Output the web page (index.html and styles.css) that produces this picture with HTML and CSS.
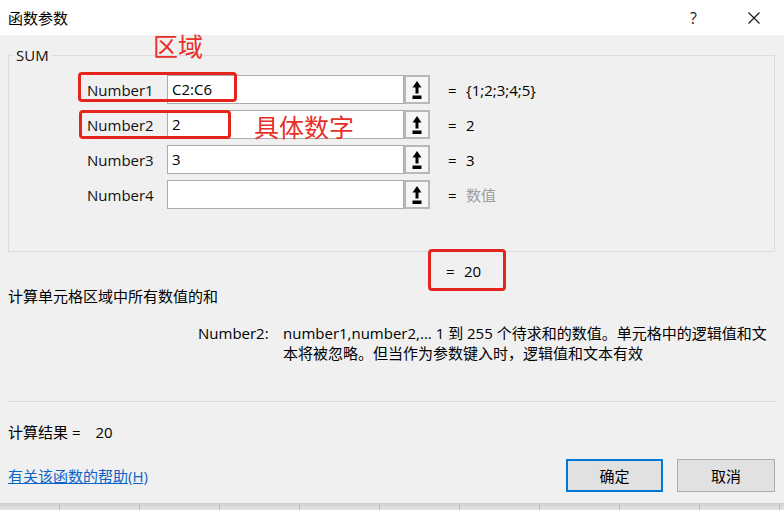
FILE: index.html
```html
<!DOCTYPE html>
<html lang="zh-CN">
<head>
  <meta charset="UTF-8">
  <meta name="viewport" content="width=device-width, initial-scale=1.0">
  <title>函数参数</title>
  <link rel="stylesheet" href="styles.css">
</head>
<body>

  <div class="dialog">
    <header class="titlebar">
      <div class="title">函数参数</div>
      <div class="title-help">?</div>
      <div class="title-close">
        <svg width="12" height="12" viewBox="0 0 12 12"><path d="M0.5 0.5 L11.5 11.5 M11.5 0.5 L0.5 11.5" stroke="#111" stroke-width="1.1" fill="none"/></svg>
      </div>
    </header>

    <div class="content">
      <fieldset class="group">
        <legend>SUM</legend>

        <div class="arg-row">
          <span class="arg-label">Number1</span>
          <div class="arg-input">C2:C6</div>
          <div class="ref-btn">
            <svg width="12" height="18" viewBox="0 0 12 18"><polygon points="6,0 10.5,6.5 1.5,6.5" fill="#000"/><rect x="4.5" y="6" width="3" height="6.5" fill="#000"/><rect x="1.5" y="14.5" width="9" height="3.5" fill="#000"/></svg>
          </div>
          <span class="arg-eq">=</span>
          <span class="arg-value">{1;2;3;4;5}</span>
        </div>

        <div class="arg-row">
          <span class="arg-label">Number2</span>
          <div class="arg-input">2</div>
          <div class="ref-btn">
            <svg width="12" height="18" viewBox="0 0 12 18"><polygon points="6,0 10.5,6.5 1.5,6.5" fill="#000"/><rect x="4.5" y="6" width="3" height="6.5" fill="#000"/><rect x="1.5" y="14.5" width="9" height="3.5" fill="#000"/></svg>
          </div>
          <span class="arg-eq">=</span>
          <span class="arg-value">2</span>
        </div>

        <div class="arg-row">
          <span class="arg-label">Number3</span>
          <div class="arg-input">3</div>
          <div class="ref-btn">
            <svg width="12" height="18" viewBox="0 0 12 18"><polygon points="6,0 10.5,6.5 1.5,6.5" fill="#000"/><rect x="4.5" y="6" width="3" height="6.5" fill="#000"/><rect x="1.5" y="14.5" width="9" height="3.5" fill="#000"/></svg>
          </div>
          <span class="arg-eq">=</span>
          <span class="arg-value">3</span>
        </div>

        <div class="arg-row">
          <span class="arg-label">Number4</span>
          <div class="arg-input"></div>
          <div class="ref-btn">
            <svg width="12" height="18" viewBox="0 0 12 18"><polygon points="6,0 10.5,6.5 1.5,6.5" fill="#000"/><rect x="4.5" y="6" width="3" height="6.5" fill="#000"/><rect x="1.5" y="14.5" width="9" height="3.5" fill="#000"/></svg>
          </div>
          <span class="arg-eq">=</span>
          <span class="arg-value placeholder">数值</span>
        </div>
      </fieldset>

      <div class="total"><span class="arg-eq">=</span><span>20</span></div>

      <p class="summary">计算单元格区域中所有数值的和</p>

      <div class="arg-help">
        <span class="arg-help-name">Number2:</span>
        <p class="arg-help-text">number1,number2,... 1 到 255 个待求和的数值。单元格中的逻辑值和文<br>本将被忽略。但当作为参数键入时，逻辑值和文本有效</p>
      </div>

      <hr class="divider">

      <div class="result">计算结果 =<span class="result-value">20</span></div>

      <div class="footer">
        <a href="#" class="help-link">有关该函数的帮助(H)</a>
        <div class="footer-buttons">
          <button class="btn btn-default">确定</button>
          <button class="btn">取消</button>
        </div>
      </div>
    </div>

    <!-- annotations drawn on top of the screenshot -->
    <div class="mark mark-range"></div>
    <div class="mark mark-number"></div>
    <div class="mark mark-total"></div>
    <div class="note note-range">区域</div>
    <div class="note note-number">具体数字</div>
  </div>

  <div class="sheet"></div>

</body>
</html>
```

FILE: styles.css
```css
body {
  margin: 0;
  font-family: 'Open Sans', 'Noto Sans CJK SC', sans-serif;
  font-size: 15px;
  line-height: 20px;
  color: #000;
  background-color: #f0f0f0;
}

.dialog {
  position: relative;
  height: 503px;
  background-color: #f0f0f0;
}

.titlebar {
  display: flex;
  align-items: center;
  height: 35px;
  padding-left: 8px;
  background-color: #fff;
}

.title {
  flex: 1;
  font-size: 15px;
}

.title-help {
  width: 58px;
  font-size: 16px;
  color: #222;
}

.title-close {
  display: flex;
  width: 36px;
  padding-top: 1px;
}

.content {
  padding: 11px 9px 0 8px;
}

/* group box */
.group {
  margin: 0;
  padding: 11px 0 42px 0;
  border: 1px solid #dcdcdc;
  min-width: 0;
}

.group legend {
  margin-left: 5px;
  padding: 0 2px;
  line-height: 18px;
  color: #111;
}

.arg-row {
  display: flex;
  align-items: center;
  height: 29px;
  margin-left: 78px;
  margin-bottom: 6px;
}

.arg-row:last-child {
  margin-bottom: 0;
}

.arg-label {
  width: 80px;
  color: #111;
}

.arg-input {
  box-sizing: border-box;
  width: 237px;
  height: 29px;
  padding: 3px 4px 0;
  border: 1px solid #acacac;
  background-color: #fff;
}

.ref-btn {
  box-sizing: border-box;
  display: flex;
  align-items: center;
  justify-content: center;
  width: 26px;
  height: 29px;
  border: 2px solid #b8b8b8;
  background-color: #f6f6f6;
}

.arg-eq {
  display: inline-block;
  width: 18px;
  margin-left: 18px;
}

.arg-value.placeholder {
  color: #9d9d9d;
}

/* under the group box */
.total {
  margin-top: 9px;
  padding-left: 420px;
}

.summary {
  margin: 5px 0 0;
}

.arg-help {
  display: flex;
  margin-top: 17px;
  padding-left: 190px;
}

.arg-help-name {
  width: 85px;
  flex-shrink: 0;
}

.arg-help-text {
  margin: 0;
  white-space: nowrap;
}

.divider {
  margin: 38px 0 0;
  border: none;
  border-top: 1px solid #d9d9d9;
}

.result {
  margin-top: 20px;
}

.result-value {
  margin-left: 15px;
}

.footer {
  display: flex;
  align-items: center;
  justify-content: space-between;
  margin-top: 17px;
}

.help-link {
  color: #0a64c8;
  text-decoration: underline;
}

.footer-buttons {
  display: flex;
  gap: 14px;
}

.btn {
  box-sizing: border-box;
  width: 98px;
  height: 33px;
  font-family: inherit;
  font-size: 15px;
  color: #000;
  background-color: #e1e1e1;
  border: 1px solid #adadad;
  padding: 0;
}

.btn-default {
  width: 97px;
  border: 2px solid #0078d7;
}

/* red annotations */
.mark {
  position: absolute;
  border: 3px solid #e5241d;
  border-radius: 4px;
}

.mark-range {
  left: 78px;
  top: 72px;
  width: 153px;
  height: 24px;
}

.mark-number {
  left: 79px;
  top: 110px;
  width: 146px;
  height: 23px;
}

.mark-total {
  left: 428px;
  top: 249px;
  width: 72px;
  height: 36px;
}

.note {
  position: absolute;
  font-family: 'Noto Sans CJK SC', sans-serif;
  font-size: 25px;
  line-height: 30px;
  color: #e8302a;
}

.note-range {
  left: 153px;
  top: 30px;
}

.note-number {
  left: 254px;
  top: 111px;
}

/* spreadsheet grid peeking under the dialog */
.sheet {
  height: 7px;
  background:
    repeating-linear-gradient(to right, transparent 0 59px, #bdbdbd 59px 60px, transparent 60px 80px),
    linear-gradient(#cdcdcd, #e6e6e6);
}
```
